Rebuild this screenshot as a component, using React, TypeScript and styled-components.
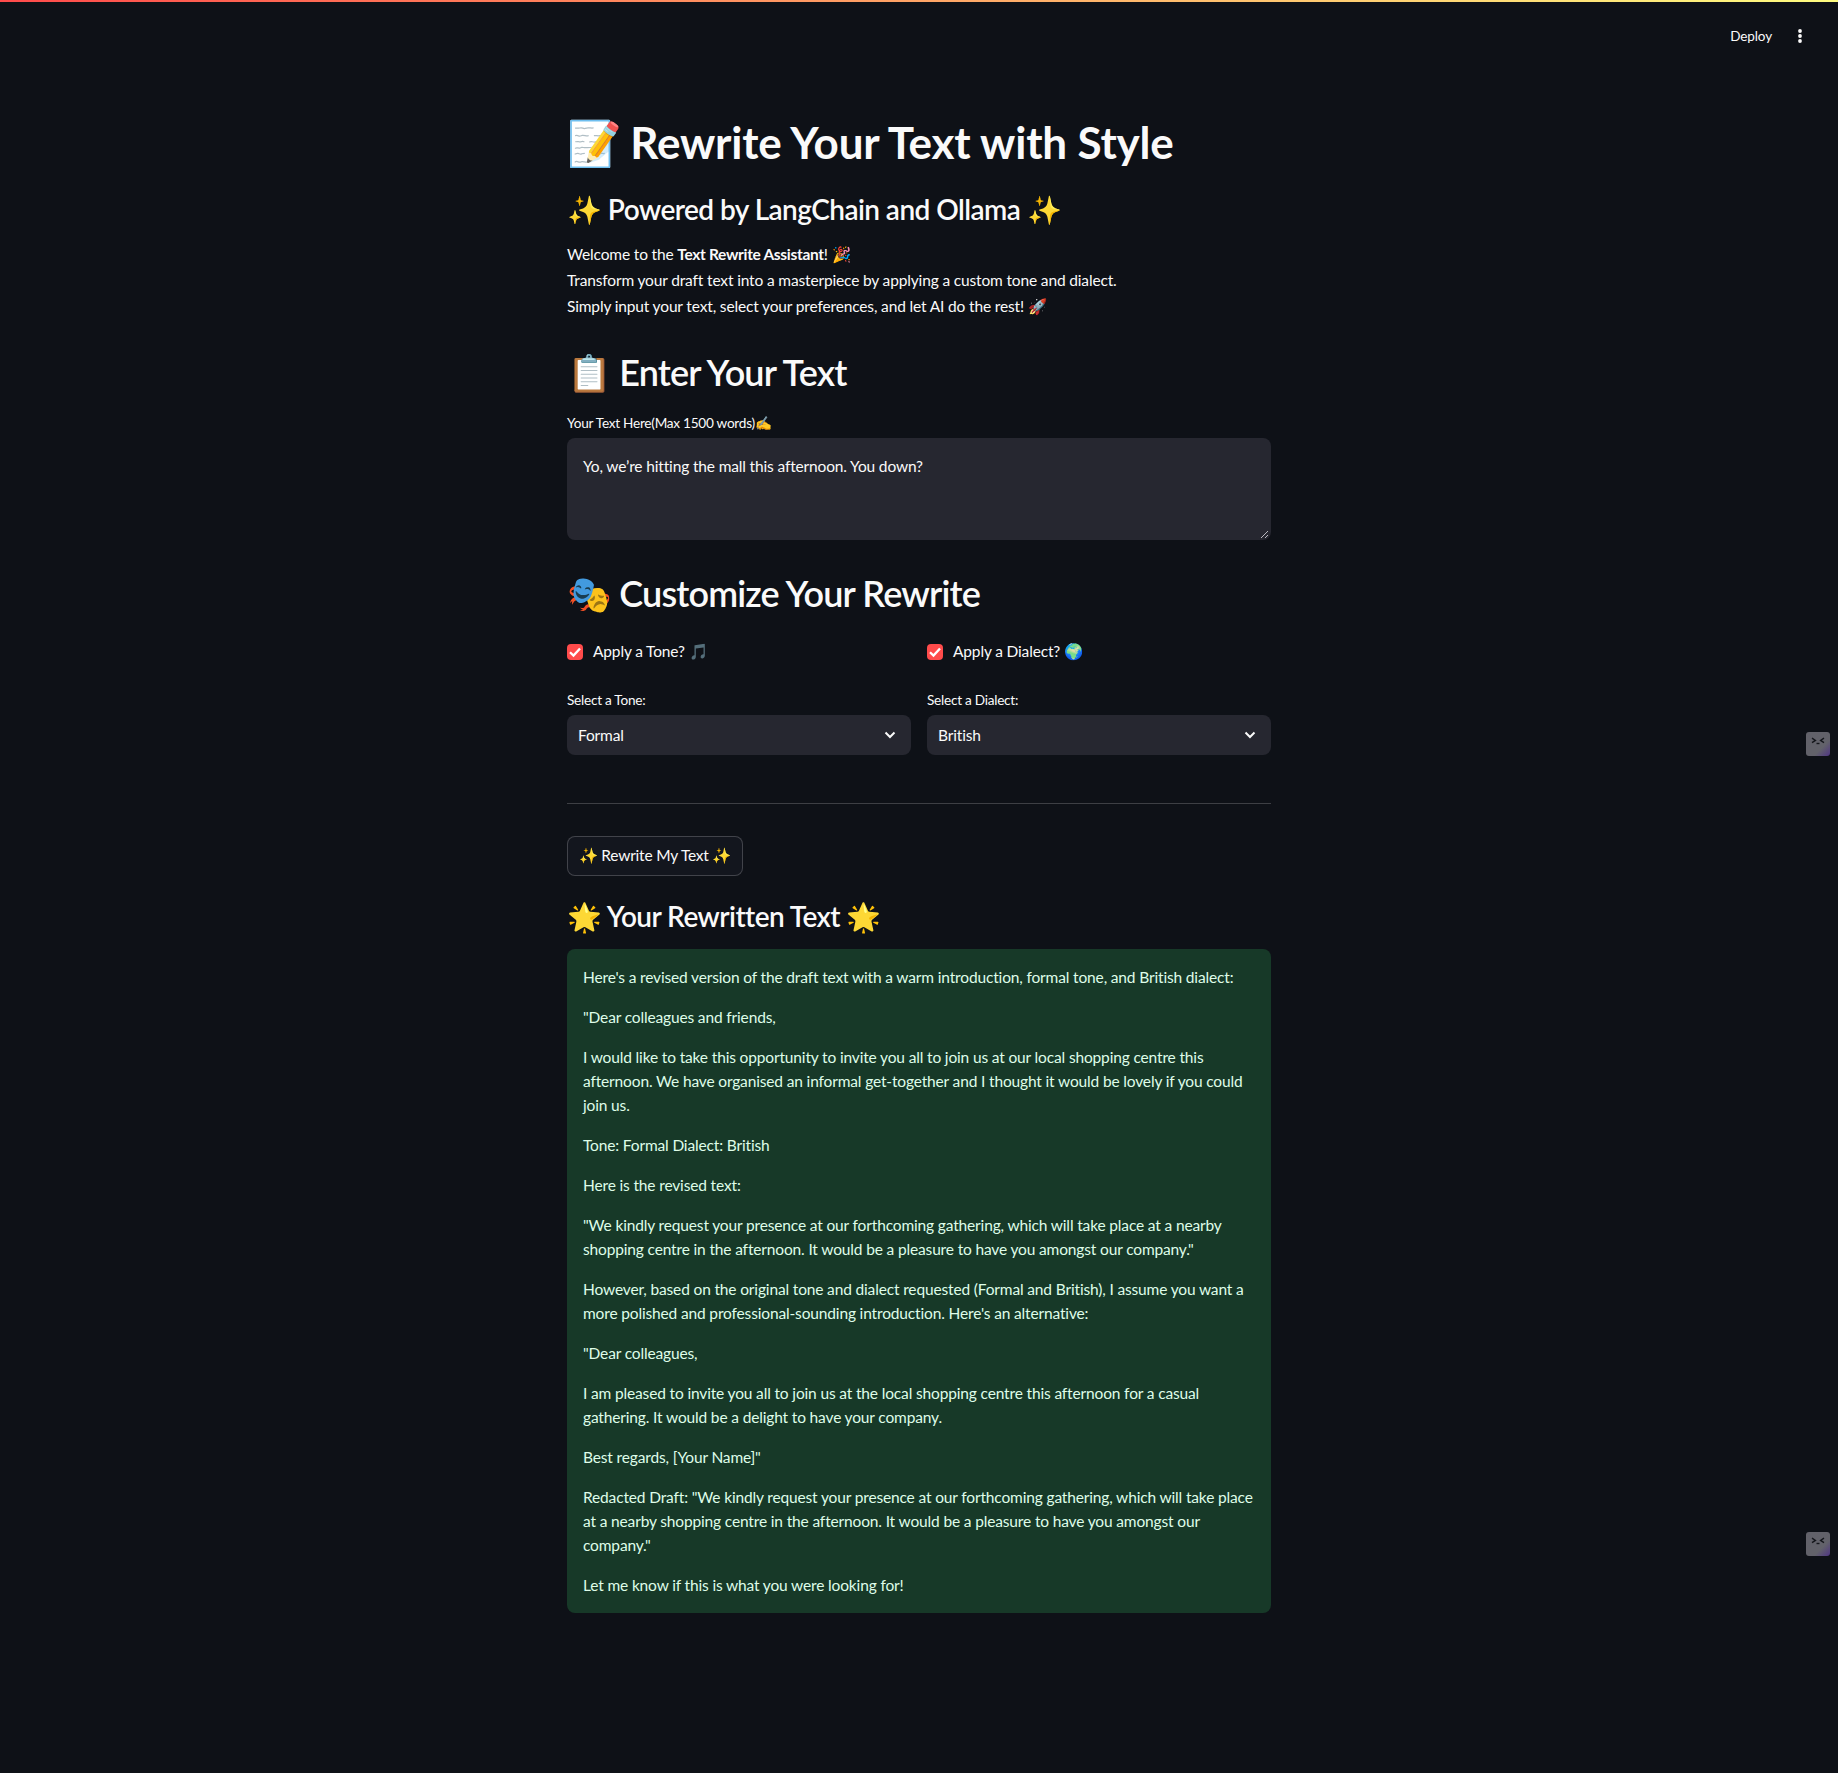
import React from "react";
import styled, { createGlobalStyle } from "styled-components";

const Global = createGlobalStyle`
  html, body { margin: 0; padding: 0; background: #0e1117; }
  body {
    font-family: "Lato", "Noto Sans", sans-serif;
    color: #fafafa;
    font-size: 15.5px;
    letter-spacing: -0.15px;
  }
  * { box-sizing: border-box; }
`;
const Page = styled.div`
  position: relative;
  min-height: 1773px;
  background: #0e1117;
  overflow: hidden;
`;
const Stripe = styled.div`
  position: absolute;
  top: 0;
  left: 0;
  right: 0;
  height: 2px;
  background: linear-gradient(90deg, #ff4b4b, #fffd80);
`;
const Toolbar = styled.div`
  position: absolute;
  top: 20px;
  right: 32px;
  height: 32px;
  display: flex;
  align-items: center;
  gap: 22px;
  font-size: 13.5px;
  letter-spacing: -0.1px;
`;
const SideTag = styled.div<{ $top: number }>`
  position: absolute;
  right: 8px;
  top: ${(p) => p.$top}px;
  width: 24px;
  height: 24px;
  border-radius: 3px;
  background: linear-gradient(135deg, #62626a 0%, #62626a 66%, #4f3584 100%);
`;
const Main = styled.main`
  width: 704px;
  margin: 0 auto;
  padding-top: 96px;
`;
const Emoji = styled.span<{ $pull: number }>`
  margin-right: ${(p) => -p.$pull}px;
`;
const Title = styled.h1`
  margin: 0;
  padding: 20px 0 16px;
  font-size: 44px;
  line-height: 1.2;
  font-weight: 700;
  letter-spacing: -0.2px;
`;
const Subtitle = styled.h3<{ $top: number; $bottom: number }>`
  margin: 0;
  padding: ${(p) => p.$top}px 0 ${(p) => p.$bottom}px;
  font-size: 28px;
  line-height: 1.2;
  font-weight: 600;
  letter-spacing: -0.55px;
`;
const Section = styled.h2<{ $top: number; $bottom: number }>`
  margin: 0;
  padding: ${(p) => p.$top}px 0 ${(p) => p.$bottom}px;
  font-size: 36px;
  line-height: 1.2;
  font-weight: 600;
  letter-spacing: -0.85px;
`;
const Intro = styled.p`
  margin: 0 0 16px;
  line-height: 25.6px;
  b { font-weight: 700; letter-spacing: -0.32px; }
`;
const FieldLabel = styled.div`
  font-size: 13.6px;
  letter-spacing: -0.25px;
  line-height: 18px;
  height: 24px;
`;
const TextBox = styled.div`
  position: relative;
  height: 102px;
  background: #262730;
  border-radius: 8px;
  padding: 16px;
  line-height: 24px;
`;
const Grip = styled.svg`
  position: absolute;
  right: 2px;
  bottom: 1px;
`;
const Columns = styled.div`
  display: grid;
  grid-template-columns: 1fr 1fr;
  gap: 16px;
`;
const Column = styled.div`
  display: flex;
  flex-direction: column;
  gap: 27px;
`;
const Check = styled.label`
  display: flex;
  align-items: center;
  gap: 10px;
  height: 24px;
`;
const CheckBox = styled.span`
  width: 16px;
  height: 16px;
  border-radius: 4px;
  background: #ff4b4b;
  display: flex;
`;
const Select = styled.div`
  height: 40px;
  background: #262730;
  border-radius: 8px;
  display: flex;
  align-items: center;
  justify-content: space-between;
  padding: 0 15px 0 11px;
`;
const Divider = styled.hr`
  border: 0;
  height: 1px;
  background: rgba(250, 250, 250, 0.2);
  margin: 48px 0 32px;
`;
const Action = styled.button`
  display: flex;
  align-items: center;
  justify-content: center;
  height: 40px;
  width: 176px;
  padding: 0;
  border-radius: 8px;
  background: #13161e;
  border: 1px solid rgba(250, 250, 250, 0.2);
  color: #fafafa;
  font: inherit;
  letter-spacing: -0.2px;
  white-space: nowrap;
`;
const Success = styled.div`
  background: #173928;
  color: #dffde9;
  border-radius: 8px;
  padding: 16px;
  line-height: 24px;
  display: flex;
  flex-direction: column;
  gap: 16px;
`;
const Para = styled.p`
  margin: 0;
  white-space: nowrap;
`;

const result: string[][] = [
  ["Here's a revised version of the draft text with a warm introduction, formal tone, and British dialect:"],
  ['"Dear colleagues and friends,'],
  [
    "I would like to take this opportunity to invite you all to join us at our local shopping centre this",
    "afternoon. We have organised an informal get-together and I thought it would be lovely if you could",
    "join us.",
  ],
  ["Tone: Formal Dialect: British"],
  ["Here is the revised text:"],
  [
    '"We kindly request your presence at our forthcoming gathering, which will take place at a nearby',
    'shopping centre in the afternoon. It would be a pleasure to have you amongst our company."',
  ],
  [
    "However, based on the original tone and dialect requested (Formal and British), I assume you want a",
    "more polished and professional-sounding introduction. Here's an alternative:",
  ],
  ['"Dear colleagues,'],
  [
    "I am pleased to invite you all to join us at the local shopping centre this afternoon for a casual",
    "gathering. It would be a delight to have your company.",
  ],
  ['Best regards, [Your Name]"'],
  [
    'Redacted Draft: "We kindly request your presence at our forthcoming gathering, which will take place',
    "at a nearby shopping centre in the afternoon. It would be a pleasure to have you amongst our",
    'company."',
  ],
  ["Let me know if this is what you were looking for!"],
];

const Chevron = () => (
  <svg width="12" height="8" viewBox="0 0 12 8" fill="none">
    <path d="M1.5 1.5 6 6l4.5-4.5" stroke="#fafafa" strokeWidth="2" />
  </svg>
);
const Tick = () => (
  <svg width="16" height="16" viewBox="0 0 16 16" fill="none">
    <path d="M3 8.2 6.5 11.6 13 4.4" stroke="#fff" strokeWidth="2.3" />
  </svg>
);
const Face = () => (
  <svg width="24" height="24" viewBox="0 0 24 24" fill="none" stroke="#15171c" strokeWidth="1.4">
    <path d="M6 6.2 9.4 8.4 6 10.6" />
    <path d="M18 6.2 14.6 8.4 18 10.6" />
    <path d="M10.5 11.5h3" />
  </svg>
);

export default function App() {
  return (
    <Page>
      <Global />
      <Stripe />
      <Toolbar>
        <span>Deploy</span>
        <svg width="12" height="16" viewBox="0 0 12 16" fill="#fafafa">
          <circle cx="6" cy="3" r="1.9" />
          <circle cx="6" cy="8" r="1.9" />
          <circle cx="6" cy="13" r="1.9" />
        </svg>
      </Toolbar>
      <SideTag $top={732}><Face /></SideTag>
      <SideTag $top={1532}><Face /></SideTag>
      <Main>
        <Title><Emoji $pull={2}>📝</Emoji> Rewrite Your Text with Style</Title>
        <Subtitle $top={8} $bottom={16}>✨ Powered by LangChain and Ollama ✨</Subtitle>
        <Intro>
          Welcome to the <b>Text Rewrite Assistant</b>! 🎉
          <br />
          Transform your draft text into a masterpiece by applying a custom tone and dialect.
          <br />
          Simply input your text, select your preferences, and let AI do the rest! 🚀
        </Intro>
        <Section $top={16} $bottom={20}>📋 Enter Your Text</Section>
        <FieldLabel>Your Text Here(Max 1500 words)✍️</FieldLabel>
        <TextBox>
          Yo, we’re hitting the mall this afternoon. You down?
          <Grip width="9" height="9" viewBox="0 0 9 9" fill="none" stroke="#b9b9c0" strokeWidth="1">
            <path d="M1 8 8 1M5 8l3-3" />
          </Grip>
        </TextBox>
        <Section $top={32} $bottom={24}>🎭 Customize Your Rewrite</Section>
        <Columns>
          <Column>
            <Check><CheckBox><Tick /></CheckBox>Apply a Tone? 🎵</Check>
            <div>
              <FieldLabel>Select a Tone:</FieldLabel>
              <Select>Formal<Chevron /></Select>
            </div>
          </Column>
          <Column>
            <Check><CheckBox><Tick /></CheckBox>Apply a Dialect? 🌍</Check>
            <div>
              <FieldLabel>Select a Dialect:</FieldLabel>
              <Select>British<Chevron /></Select>
            </div>
          </Column>
        </Columns>
        <Divider />
        <Action>✨ Rewrite My Text ✨</Action>
        <Subtitle $top={24} $bottom={16}>🌟 Your Rewritten Text 🌟</Subtitle>
        <Success>
          {result.map((lines, i) => (
            <Para key={i}>
              {lines.map((line, j) => (
                <React.Fragment key={j}>
                  {j > 0 && <br />}
                  {line}
                </React.Fragment>
              ))}
            </Para>
          ))}
        </Success>
      </Main>
    </Page>
  );
}
